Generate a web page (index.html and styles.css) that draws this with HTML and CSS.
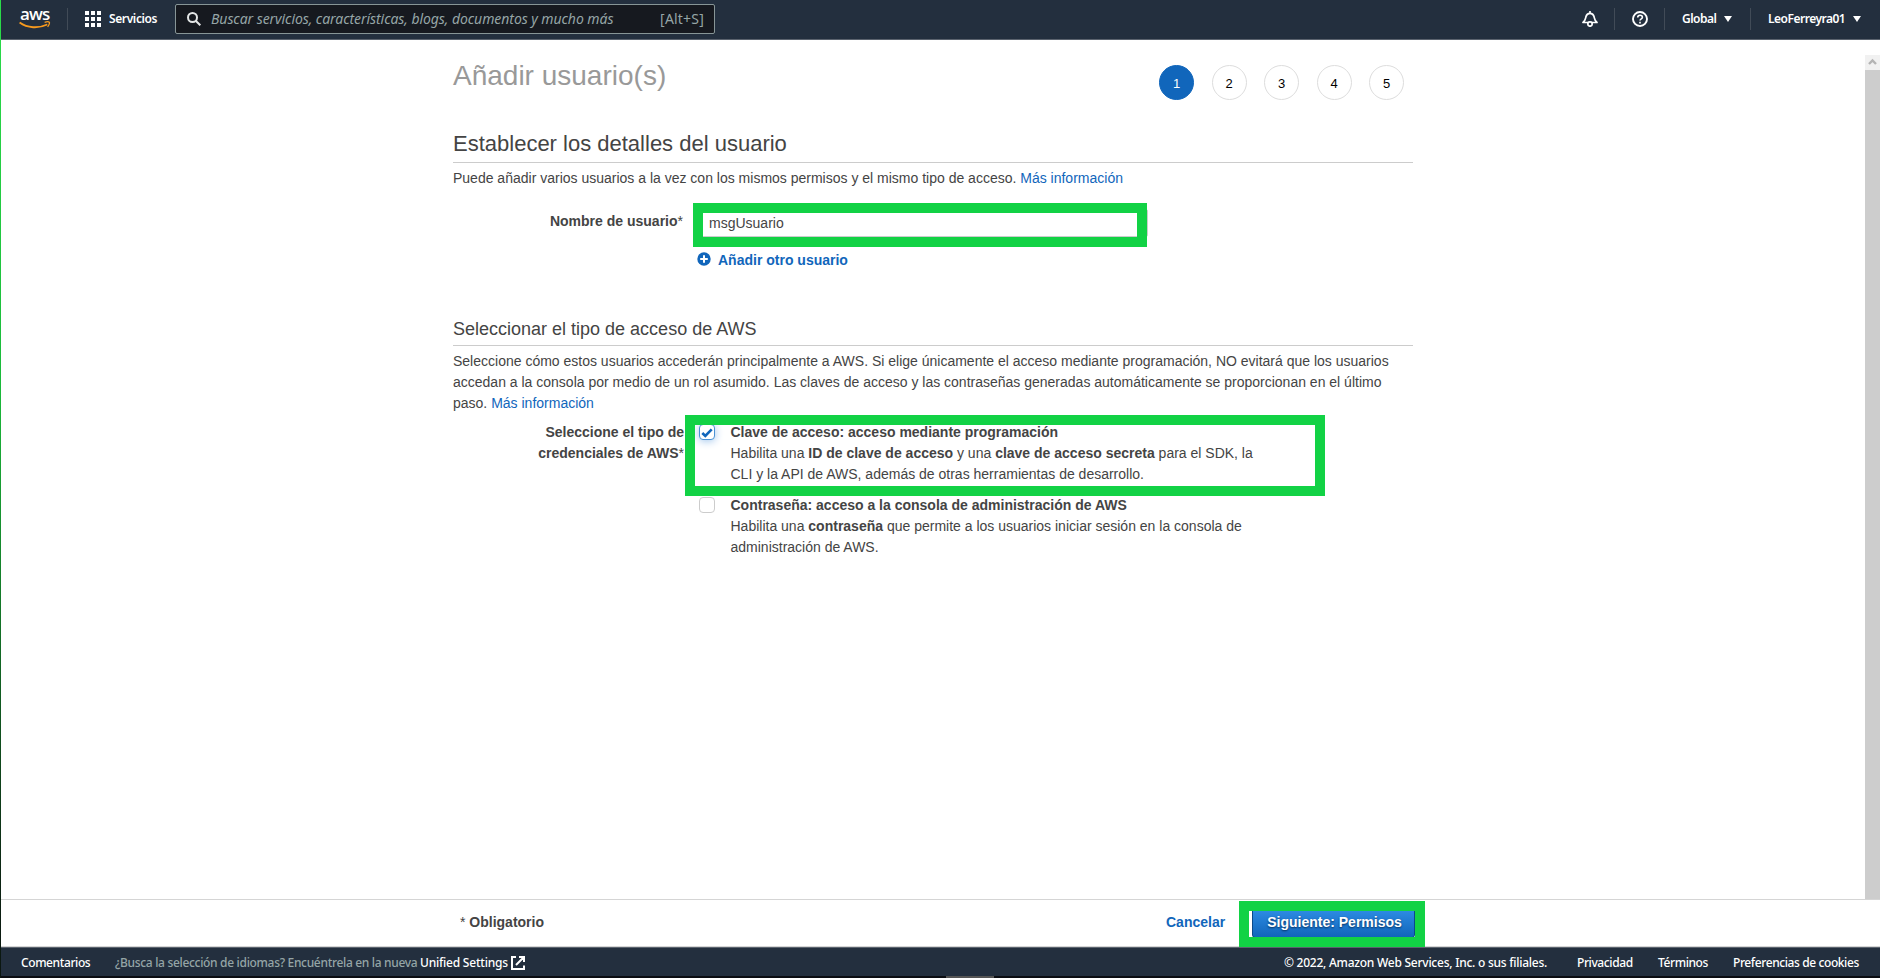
FILE: index.html
```html
<!DOCTYPE html>
<html lang="es">
<head>
<meta charset="utf-8">
<title>Añadir usuario(s)</title>
<link rel="stylesheet" href="styles.css">
</head>
<body>
<div class="page">
  <header class="topbar">
    <div class="logo"><span class="logo-word">aws</span>
      <svg class="smile" width="32" height="9" viewBox="0 0 32 9"><path d="M.6 1.6C8.5 7.3 19.5 7.700 28.300 3.500" fill="none" stroke="#f79a1e" stroke-width="1.900"/><path d="M25.600 1.300c2-.7 4.200-.6 4.700-.1s-.2 3-1.700 4.700" fill="none" stroke="#f79a1e" stroke-width="1.300"/></svg>
    </div>
    <i class="divider d1"></i>
    <svg class="grid-icon" width="16" height="16" viewBox="0 0 16 16" fill="#fff"><path d="M0 0h4v4H0zM6 0h4v4H6zM12 0h4v4h-4zM0 6h4v4H0zM6 6h4v4H6zM12 6h4v4h-4zM0 12h4v4H0zM6 12h4v4H6zM12 12h4v4h-4z"/></svg>
    <b class="services">Servicios</b>
    <div class="search">
      <svg width="14" height="14" viewBox="0 0 14 14" fill="none" stroke="#e4e7e7" stroke-width="2"><circle cx="5.500" cy="5.500" r="4.500"/><path d="M8.700 8.700l4.600 4.600"/></svg>
      <span class="placeholder">Buscar servicios, características, blogs, documentos y mucho más</span>
      <span class="shortcut">[Alt+S]</span>
    </div>
    <svg class="bell" width="16" height="16" viewBox="0 0 16 16" fill="none" stroke="#fff" stroke-width="1.700" stroke-linejoin="round"><path d="M1 11.500h14C12.500 9.500 12.600 8 12 5.500 11.500 3.300 10 2.300 8 2.300S4.500 3.300 4 5.500C3.400 8 3.500 9.500 1 11.500z"/><path d="M8 0v2"/><circle cx="8" cy="13" r="2.200" fill="#232f3e"/></svg>
    <i class="divider"></i>
    <svg class="help" width="16" height="16" viewBox="0 0 16 16" fill="none" stroke="#fff" stroke-width="1.900"><circle cx="8" cy="8" r="7"/><path d="M5.700 6.500C5.700 5 6.600 4.200 8 4.200s2.400.8 2.400 2C10.400 7.900 8 7.700 8 9.600M8 10.700v1.800" stroke-width="1.600"/></svg>
    <i class="divider"></i>
    <b class="region">Global</b><i class="caret"></i>
    <i class="divider d4"></i>
    <b class="account">LeoFerreyra01</b><i class="caret"></i>
  </header>

  <div class="viewport">
    <main class="content">
      <div class="heading">
        <h1>Añadir usuario(s)</h1>
        <ol class="steps"><li class="on">1</li><li>2</li><li>3</li><li>4</li><li>5</li></ol>
      </div>
      <h2>Establecer los detalles del usuario</h2>
      <p class="intro">Puede añadir varios usuarios a la vez con los mismos permisos y el mismo tipo de acceso. <a>Más información</a></p>
      <div class="row user-row">
        <div class="label"><b>Nombre de usuario</b>*</div>
        <div class="name-field"><div class="input">msgUsuario</div><div class="mark mark-name"></div></div>
      </div>
      <div class="add"><svg width="14" height="14" viewBox="0 0 14 14"><circle cx="7" cy="7" r="6.700" fill="#1166bb"/><path d="M7 3.200v7.600M3.200 7h7.600" stroke="#fff" stroke-width="2"/></svg><b>Añadir otro usuario</b></div>
      <h3>Seleccionar el tipo de acceso de AWS</h3>
      <p class="access">Seleccione cómo estos usuarios accederán principalmente a AWS. Si elige únicamente el acceso mediante programación, NO evitará que los usuarios<br>accedan a la consola por medio de un rol asumido. Las claves de acceso y las contraseñas generadas automáticamente se proporcionan en el último<br>paso. <a>Más información</a></p>
      <div class="row cred-row">
        <div class="label"><b>Seleccione el tipo de<br>credenciales de AWS</b>*</div>
        <div class="options">
          <div class="option">
            <span class="check checked"><svg width="12" height="10" viewBox="0 0 12 10"><path d="M1.300 5l3 3L10.700 1.300" fill="none" stroke="#1166bb" stroke-width="2.600"/></svg></span>
            <div><b>Clave de acceso: acceso mediante programación</b><br>Habilita una <b>ID de clave de acceso</b> y una <b>clave de acceso secreta</b> para el SDK, la<br>CLI y la API de AWS, además de otras herramientas de desarrollo.</div>
            <div class="mark mark-key"></div>
          </div>
          <div class="option">
            <span class="check"></span>
            <div><b>Contraseña: acceso a la consola de administración de AWS</b><br>Habilita una <b>contraseña</b> que permite a los usuarios iniciar sesión en la consola de<br>administración de AWS.</div>
          </div>
        </div>
      </div>
    </main>
    <div class="scrollbar"><svg width="15" height="15" viewBox="0 0 15 15"><path d="M4 9l3.500-3.500L11 9" fill="none" stroke="#b4b4b4" stroke-width="2.400"/></svg></div>
  </div>

  <div class="actions">
    <div class="required">* <b>Obligatorio</b></div>
    <b class="cancel">Cancelar</b>
    <div class="next-wrap"><div class="next">Siguiente: Permisos</div><div class="mark mark-next"></div></div>
  </div>

  <footer class="footer">
    <span class="f-comments">Comentarios</span>
    <span class="f-lang">¿Busca la selección de idiomas? Encuéntrela en la nueva</span>
    <span class="f-unified">Unified Settings</span>
    <svg width="14" height="14" viewBox="0 0 14 14" fill="none" stroke="#fff" stroke-width="2"><path d="M5 1H1v12h12V9.500M8 1h5v5M13 1L5 9"/></svg>
    <span class="f-copy">© 2022, Amazon Web Services, Inc. o sus filiales.</span>
    <span class="f-privacy">Privacidad</span>
    <span class="f-terms">Términos</span>
    <span class="f-cookies">Preferencias de cookies</span>
  </footer>
  <div class="bottom-edge"><i></i></div>
  <div class="left-edge"></div>
</div>
</body>
</html>
```
FILE: styles.css
```css
* { box-sizing: border-box; }
body { margin: 0; background: #fff; color: #444; font: 14px/21px "Liberation Sans", Arial, sans-serif; }
.page { position: relative; width: 1880px; height: 978px; overflow: hidden; display: flex; flex-direction: column; }
svg { display: block; flex: none; }
a { color: #1166bb; }

.topbar { height: 40px; flex: none; background: #232f3e; border-bottom: 1px solid #5b636e; display: flex; align-items: center; color: #fff; font: 12px/16px "Noto Sans", sans-serif; white-space: nowrap; padding: 0 0 2px 19px; }
.topbar b { font-weight: 600; flex: none; }
.logo { width: 32px; height: 20px; margin-top: -2px; flex: none; }
.logo-word { display: block; font: 600 17px/11px "Open Sans", sans-serif; padding-left: 1px; letter-spacing: -.9px; }
.smile { margin: 2px 0 0; }
.divider { width: 1px; height: 22px; background: #414b57; flex: none; }
.d1 { margin: 0 17px 0 16px; }
.services { width: 49px; margin: 0 17px 0 8px; letter-spacing: -.38px; }
.search { width: 540px; height: 30px; flex: none; margin: 0 867px 0 0; background: #16191f; border: 1px solid #879596; border-radius: 2px; display: flex; align-items: center; padding: 0 10px 0 11px; color: #95a5a6; }
.placeholder { font: italic 14px/18px "Noto Sans", sans-serif; margin-left: 10px; flex: 1; letter-spacing: -.06px; }
.shortcut { font-size: 14px; letter-spacing: .2px; }
.bell { margin-right: 16px; }
.help { margin: 0 16px 0 17px; }
.region { width: 35px; margin: 0 7px 0 17px; letter-spacing: -.5px; }
.caret { border: 4px solid transparent; border-top: 6px solid #fff; border-bottom: 0; flex: none; }
.d4 { margin-left: 18px; }
.account { width: 78px; margin: 0 7px 0 17px; letter-spacing: -.5px; }

.viewport { height: 859px; flex: none; display: flex; justify-content: space-between; }
.content { width: 960px; margin-left: 453px; }
.scrollbar { width: 15px; margin-top: 15px; background: linear-gradient(#f1f1f1 15px, #cdcdcd 15px); }
.heading { display: flex; justify-content: space-between; height: 79px; }
h1 { font-size: 28px; line-height: 32px; font-weight: 400; color: #999; margin: 20px 0 0; }
.steps { display: flex; gap: 17.500px; list-style: none; margin: 25px 9px 0 0; padding: 0; color: #000; }
.steps li { width: 35px; height: 35px; border: 1px solid #ddd; border-radius: 50%; text-align: center; font-size: 13px; line-height: 35px; }
.steps .on { background: #1166bb; border-color: #1166bb; color: #fff; }
h2 { font-size: 22px; line-height: 28px; height: 44px; padding-top: 11px; margin: 0; font-weight: 400; border-bottom: 1px solid #ccc; }
.intro { margin: 5px 0 0; }
.row { display: flex; }
.label { width: 230px; text-align: right; flex: none; }
.user-row { margin-top: 22px; height: 27px; }
.name-field { position: relative; width: 454px; height: 28px; margin: -2px 0 0 10px; }
.input { border: 1px solid #ccc; border-radius: 2px; width: 453px; margin-left: 2px; height: 28px; padding: 0 0 0 13px; line-height: 26px; }
.mark { position: absolute; border: 10px solid #12d245; z-index: 2; }
.mark-name { left: 0; top: -6px; width: 454px; height: 44px; }
.add { display: flex; align-items: flex-start; gap: 7px; height: 21px; color: #1166bb; margin: 11px 0 0 244px; }
.add svg { margin-top: 3px; }
.add b { margin-top: 1px; }
h3 { font-size: 18px; line-height: 24px; font-weight: 400; margin: 46px 0 0; padding-top: 1px; height: 30px; border-bottom: 1px solid #ccc; }
.access { margin: 5px 0 0; white-space: nowrap; }
.cred-row { margin-top: 8px; }
.cred-row .label { width: 231px; }
.options { margin-left: 15px; }
.option { position: relative; display: flex; gap: 15.500px; margin-bottom: 10px; white-space: nowrap; }
.check { width: 16px; height: 16px; border: 1px solid #ccc; border-radius: 4px; margin-top: 2px; flex: none; background: #fff; }
.checked { border-color: #4b91d4; box-shadow: 0 1px 8px #9cc3ec; padding: 3px 1px; }
.mark-key { left: -14px; top: -7px; width: 640px; height: 81px; }

.actions { height: 48px; flex: none; border-top: 1px solid #d5d5d5; border-bottom: 1px solid #d5d5d5; display: flex; align-items: center; padding: 0 0 2px 460px; margin-bottom: 0; }
.required { width: 706px; }
.cancel { color: #1166bb; width: 86px; }
.next-wrap { position: relative; width: 163px; height: 28px; }
.next { height: 30px; border: 1px solid #0b4a8a; border-radius: 3px; background: linear-gradient(#2e8de5, #1166bb); color: #fff; font-weight: 700; line-height: 26px; text-align: center; text-shadow: 0 1px 2px #052f5c; padding-left: 2px; }
.mark-next { left: -13px; top: -7px; width: 186px; height: 46px; }

.footer { height: 29px; flex: none; background: #232f3e; border-top: 1px solid #5b636e; display: flex; align-items: center; color: #fff; font: 500 12px/16px "Noto Sans", sans-serif; white-space: nowrap; padding: 1px 0 0 21px; }
.footer span { flex: none; letter-spacing: -.4px; }
.f-comments { width: 94px; }
.footer .f-lang { width: 305px; color: #95a5a6; letter-spacing: -.32px; }
.footer .f-unified { width: 91px; letter-spacing: -.22px; }
.footer .f-copy { width: 293px; margin-left: 759px; letter-spacing: -.25px; }
.f-privacy { width: 81px; }
.f-terms { width: 75px; }
.bottom-edge { height: 2px; background: #0b0d12; flex: none; display: flex; }
.bottom-edge i { width: 48px; margin-left: 946px; background: #555; }
.left-edge { position: absolute; left: 0; top: 0; width: 1px; height: 978px; background: linear-gradient(#2bdc4a, #1bb93a 40%, #0c2413 90%, #0b1510); }
```
